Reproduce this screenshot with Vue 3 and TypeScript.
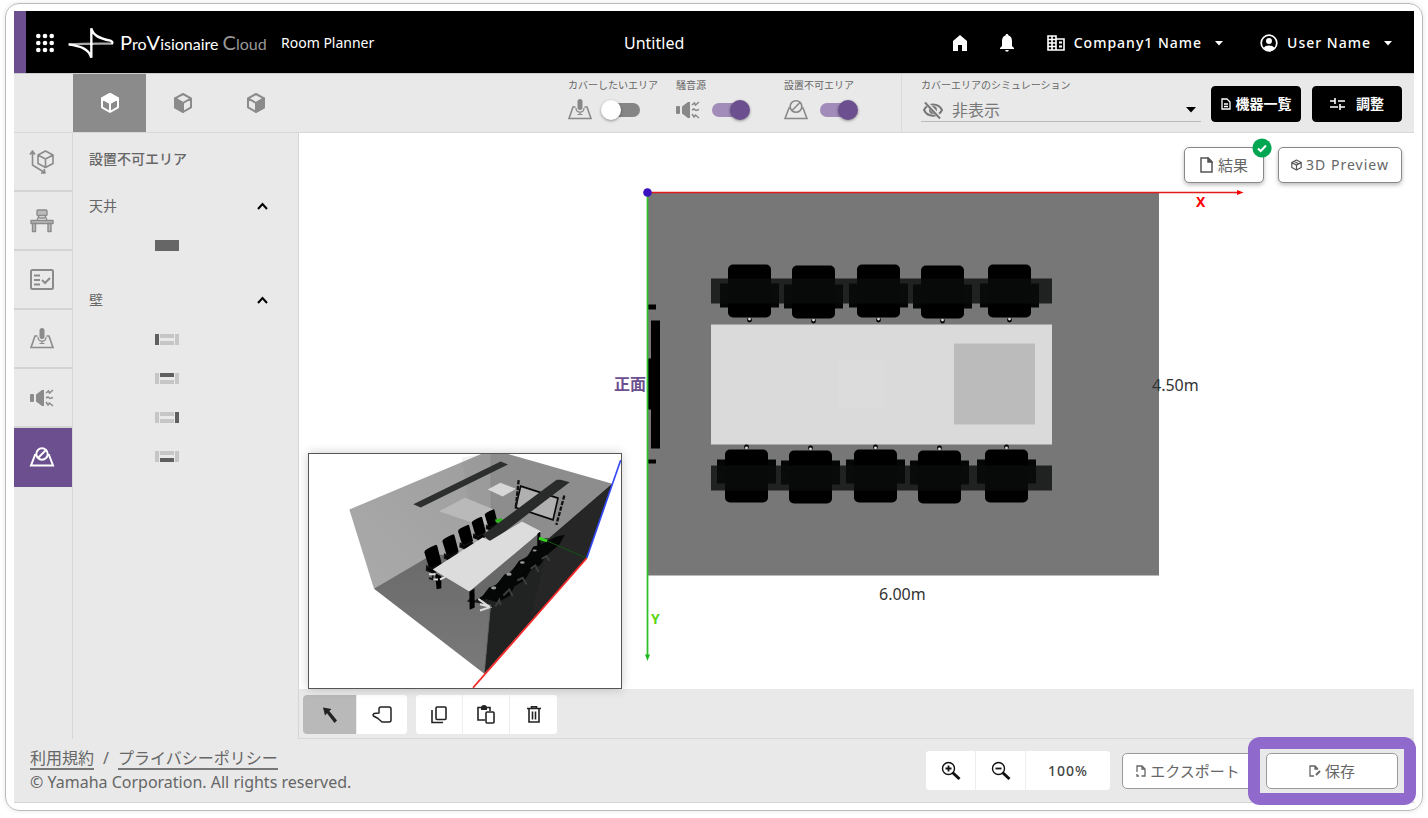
<script setup lang="ts">
import { ref } from 'vue'

interface Layer { key: string; label: string; on: boolean }

const layers = ref<Layer[]>([
  { key: 'cover', label: 'カバーしたいエリア', on: false },
  { key: 'noise', label: '騒音源', on: true },
  { key: 'blocked', label: '設置不可エリア', on: true },
])
const views = [
  { key: 'top', label: '上面' },
  { key: 'front', label: '正面図' },
  { key: 'side', label: '側面' },
]
const view = ref('top')
const steps = [
  { key: 'room', label: '部屋' },
  { key: 'furniture', label: '家具' },
  { key: 'check', label: '条件' },
  { key: 'cover', label: 'カバーエリア' },
  { key: 'noise', label: '騒音' },
  { key: 'blocked', label: '設置不可' },
]
const step = ref('blocked')
const walls = ['left', 'top', 'right', 'bottom']
const simulation = ref('off')
const tool = ref('select')

const upperChairs = [[749, 264], [813, 265], [878, 264], [942, 265], [1009, 264]]
const lowerChairs = [[746, 449], [810, 450], [875, 449], [939, 450], [1006, 449]]
</script>

<template>
  <div class="page">
    <div class="frame">
      <div class="app">
        <header class="header">
          <div class="brand">
            <button class="plain" aria-label="アプリ一覧">
              <svg width="18" height="20" viewBox="0 0 18 20" fill="#fff">
                <template v-for="r in 3" :key="r">
                  <circle v-for="c in 3" :key="c" :cx="c * 6.7 - 4.4" :cy="r * 7 - 4" r="2.3" />
                </template>
              </svg>
            </button>
            <svg class="mark" width="46" height="32" viewBox="205 83 138 94" fill="none">
              <path d="M207 134 Q262 131 338 132" stroke="#aaa" stroke-width="7" />
              <path d="M275 136 V86 C280 108 300 116 332 123 Q342 127 336 133" stroke="#fff" stroke-width="7" stroke-linejoin="bevel" />
              <path d="M207 134 C240 139 267 146 275 174 V132" stroke="#fff" stroke-width="7" stroke-linejoin="bevel" />
            </svg>
            <span class="logo"><b>P</b>ro<b>V</b>isionaire <span class="cloud"><b>C</b>loud</span></span>
            <span class="product">Room Planner</span>
          </div>
          <div class="title">Untitled</div>
          <nav class="account">
            <button class="plain" aria-label="ホーム">
              <svg width="16" height="16" viewBox="0 0 16 16" fill="#fff"><path d="M8 0 1 6v10h5v-6h4v6h5V6z" /></svg>
            </button>
            <button class="plain bell" aria-label="通知">
              <svg width="16" height="18" viewBox="0 0 16 18" fill="#fff"><path d="M8 0c-1 0-1.500.6-1.500 1.500C4 2.200 3 4.400 3 7v5l-2 2v1h14v-1l-2-2V7c0-2.600-1-4.800-3.500-5.500C9.500.6 9 0 8 0zM6.200 16h3.600a1.800 1.800 0 0 1-3.600 0z" /></svg>
            </button>
            <button class="plain menu">
              <svg width="18" height="16" viewBox="0 0 18 16" fill="none" stroke="#fff" stroke-width="1.600">
                <path d="M9 15H1V1h8v14M9 4h8v11H8M1 4.500h8M1 8h8M1 11.500h8M5 1v14" /><path d="M12 7.500h3M12 11.500h3" stroke-width="2" />
              </svg>
              <span>Company1 Name</span>
              <svg class="caret" width="8" height="5" viewBox="0 0 8 5" fill="#fff"><path d="M0 0h8L4 4.500z" /></svg>
            </button>
            <button class="plain menu user">
              <svg width="18" height="18" viewBox="0 0 18 18" fill="none" stroke="#fff">
                <circle cx="9" cy="9" r="7.800" stroke-width="1.700" /><circle cx="9" cy="7" r="3" fill="#fff" stroke="none" /><path d="M3.500 14c2-3.300 9-3.300 11 0-3 3.300-8 3.300-11 0z" fill="#fff" stroke="none" />
              </svg>
              <span>User Name</span>
              <svg class="caret" width="8" height="5" viewBox="0 0 8 5" fill="#fff"><path d="M0 0h8L4 4.500z" /></svg>
            </button>
          </nav>
        </header>

        <div class="toolbar">
          <div class="views">
            <button v-for="v in views" :key="v.key" :aria-label="v.label" :class="['view', { active: view === v.key }]" @click="view = v.key">
              <svg width="20" height="22" viewBox="0 0 20 22" fill="none" stroke="currentColor" stroke-width="2" stroke-linejoin="round">
                <path d="M10 2 18 6.300v9L10 20 2 15.300v-9zM2 6.300 10 11l8-4.700M10 11v9" />
                <path v-if="v.key === 'top'" d="M10 2 18 6.300 10 11 2 6.300z" fill="currentColor" />
                <path v-else-if="v.key === 'front'" d="M2 6.300 10 11v9l-8-4.700z" fill="currentColor" />
                <path v-else d="M18 6.300 10 11v9l8-4.700z" fill="currentColor" />
              </svg>
            </button>
          </div>
          <div class="layers">
            <label v-for="l in layers" :key="l.key" class="layer">
              <span class="caption">{{ l.label }}</span>
              <span class="layer-row">
                <svg v-if="l.key === 'cover'" width="24" height="22" viewBox="0 0 24 22" fill="none" stroke="#888" stroke-width="1.500">
                  <path d="M7.500 8H5L1 19.500h22L19 8h-2.500" /><rect x="9.500" y="0" width="5" height="11" rx="2.500" fill="#888" stroke="none" /><path d="M8 9c0 5.500 8 5.500 8 0M12 13v2.500M9.500 15.500h5" stroke-width="1.200" />
                </svg>
                <svg v-else-if="l.key === 'noise'" width="24" height="22" viewBox="0 0 24 22" fill="#888">
                  <rect x="0" y="7" width="4" height="8" rx="1" /><path d="M6 7.500 12 3h2v16h-2L6 14.500z" /><path d="m16 6 2.500-2 1 2L23 3M16 11l2-1 2 1.500 3-1M16 15l2 3 1.500-2 3.500 3" fill="none" stroke="#888" stroke-width="1.500" />
                </svg>
                <svg v-else width="24" height="22" viewBox="0 0 24 22" fill="none" stroke="#888" stroke-width="1.600">
                  <path d="M6.500 9H5L1 19.500h22L19 9h-1.500" /><circle cx="12" cy="7.500" r="5.800" /><path d="m8 11.500 8-8" />
                </svg>
                <input v-model="l.on" type="checkbox" role="switch" class="switch">
              </span>
            </label>
          </div>
          <div class="simulation">
            <label class="caption" for="simulation">カバーエリアのシミュレーション</label>
            <div class="select-box">
              <svg width="20" height="18" viewBox="0 0 20 18" fill="none" stroke="#777" stroke-width="2">
                <path d="M1 9c3.500-7.500 14.500-7.500 18 0-3.500 7.500-14.500 7.500-18 0z" /><circle cx="10" cy="9" r="3" fill="#777" /><path d="m2.500 1 15 16" stroke="#e9e9e9" stroke-width="4" /><path d="m2 1.500 15 16" />
              </svg>
              <select id="simulation" v-model="simulation">
                <option value="off">非表示</option>
                <option value="on">表示</option>
              </select>
              <svg class="select-caret" width="10" height="6" viewBox="0 0 10 6"><path d="M0 0h10L5 5.500z" /></svg>
            </div>
          </div>
          <div class="actions">
            <button class="dark">
              <svg width="10" height="12" viewBox="0 0 10 12" fill="none" stroke="#fff" stroke-width="1.300"><path d="M1 1h5l3 3v7H1zM3 6h4M3 8.500h4" /></svg>
              <span>機器一覧</span>
            </button>
            <button class="dark wide">
              <svg width="15" height="14" viewBox="0 0 15 14" fill="none" stroke="#fff" stroke-width="1.600"><path d="M0 4h5M5 1v6M8 4h7M0 10h8M10 7v6M10 10h5" /></svg>
              <span>調整</span>
            </button>
          </div>
        </div>

        <div class="body">
          <nav class="rail">
            <button v-for="s in steps" :key="s.key" :aria-label="s.label" :class="['step', { active: step === s.key }]" @click="step = s.key">
              <svg v-if="s.key === 'room'" width="26" height="26" viewBox="0 0 26 26" fill="none" stroke="currentColor" stroke-width="1.600" stroke-linejoin="round">
                <path d="m16.500 2 7.500 4v8.500l-7.500 4-7.500-4V6zM9 6l7.500 4L24 6M16.500 10v8.500M3.500 3v13l12 7.500M1 5.500 3.500 2 6 5.500M12 24h4l-1-4" />
              </svg>
              <svg v-else-if="s.key === 'furniture'" width="26" height="26" viewBox="0 0 26 26" fill="#bbb" stroke="currentColor" stroke-width="1.400" stroke-linejoin="round">
                <rect x="8" y="2" width="10" height="5.500" rx="1" /><path d="m10 7.500-2 5M16 7.500l2 5M10 10h6" /><path d="M2 12.500h22v3H2z" /><path d="M3.500 15.500h3v8h-3zM19 15.500h3v8h-3z" />
              </svg>
              <svg v-else-if="s.key === 'check'" width="26" height="26" viewBox="0 0 26 26" fill="none" stroke="currentColor" stroke-width="2">
                <rect x="2" y="3" width="22" height="19" rx="1.500" /><path d="M5 8.500h6M5 13h6M5 17.500h6M13 13l3 3 5-5" />
              </svg>
              <svg v-else-if="s.key === 'cover'" width="26" height="24" viewBox="-1 -1 26 24" fill="none" stroke="currentColor" stroke-width="1.600">
                <path d="M7.500 8H5L1 19.500h22L19 8h-2.500" /><rect x="9.500" y="0" width="5" height="11" rx="2.500" fill="currentColor" stroke="none" /><path d="M8 9c0 5.500 8 5.500 8 0M12 13v2.500M9.500 15.500h5" stroke-width="1.200" />
              </svg>
              <svg v-else-if="s.key === 'noise'" width="26" height="24" viewBox="-1 -1 26 24" fill="currentColor">
                <rect x="0" y="7" width="4" height="8" rx="1" /><path d="M6 7.500 12 3h2v16h-2L6 14.500z" /><path d="m16 6 2.500-2 1 2L23 3M16 11l2-1 2 1.500 3-1M16 15l2 3 1.500-2 3.500 3" fill="none" stroke="currentColor" stroke-width="1.500" />
              </svg>
              <svg v-else width="26" height="24" viewBox="-1 -1 26 24" fill="none" stroke="currentColor" stroke-width="2">
                <path d="M6.500 9H5L1 19.500h22L19 9h-1.500" /><circle cx="12" cy="8" r="5.700" /><path d="m8 12 8-8" />
              </svg>
            </button>
          </nav>

          <aside class="panel">
            <h2>設置不可エリア</h2>
            <section>
              <button class="plain section-head">
                <span>天井</span>
                <svg width="11" height="8" viewBox="0 0 11 8" fill="none" stroke="#000" stroke-width="2"><path d="M1 7 5.500 2 10 7" /></svg>
              </button>
              <button class="plain item" aria-label="天井エリア"><svg width="24" height="12"><rect width="24" height="11" fill="#666" /></svg></button>
            </section>
            <section>
              <button class="plain section-head">
                <span>壁</span>
                <svg width="11" height="8" viewBox="0 0 11 8" fill="none" stroke="#000" stroke-width="2"><path d="M1 7 5.500 2 10 7" /></svg>
              </button>
              <button v-for="w in walls" :key="w" class="plain item" :aria-label="w">
                <svg width="24" height="12" viewBox="0 0 24 12" fill="#c6c6c6">
                  <rect :class="{ on: w === 'left' }" width="4" height="11" />
                  <rect :class="{ on: w === 'top' }" x="5" width="14" height="4" />
                  <rect :class="{ on: w === 'right' }" x="20" width="4" height="11" />
                  <rect :class="{ on: w === 'bottom' }" x="5" y="7" width="14" height="4" />
                </svg>
              </button>
            </section>
          </aside>

          <main class="work">
            <div class="canvas">
              <svg class="plan" viewBox="299 133 1115 555">
                <rect x="648" y="192" width="511" height="383" fill="#777" />
                <path d="M648 304h8v5h-8zM648 459h8v4h-8zM651 320h9v128h-9zM648 358h4v51h-4z" />
                <rect x="711" y="324" width="341" height="120" fill="#dadada" />
                <rect x="838" y="360" width="46" height="47" fill="#dcdcdc" />
                <rect x="954" y="343" width="81" height="81" fill="#bbb" />
                <g v-for="c in upperChairs" :key="c[0]">
                  <circle :cx="c[0] + 0.5" :cy="c[1] + 55.5" r="2.400" />
                  <circle :cx="c[0] + 0.5" :cy="c[1] + 54.5" r="1.400" fill="#ddd" />
                  <rect :x="c[0] - 29" :y="c[1] + 19" width="59" height="24" fill="#050606" />
                  <rect :x="c[0] - 21" :y="c[1]" width="43" height="53" rx="5" />
                </g>
                <g v-for="c in lowerChairs" :key="c[0]">
                  <circle :cx="c[0] + 0.5" :cy="c[1] - 2.500" r="2.400" />
                  <circle :cx="c[0] + 0.5" :cy="c[1] - 1.500" r="1.400" fill="#ddd" />
                  <rect :x="c[0] - 29" :y="c[1] + 10" width="59" height="24" fill="#050606" />
                  <rect :x="c[0] - 21" :y="c[1]" width="43" height="53" rx="5" />
                </g>
                <path d="M711 278h341v25H711zM711 465h341v25H711z" fill="#0a0d0c" opacity=".8" />
                <path d="M648 192h590" stroke="#e31b1b" stroke-width="1.600" /><path d="m1237 189.500 6.500 2.500-6.500 2.500z" fill="#f00" />
                <path d="M647.500 192v464" stroke="#32c02b" stroke-width="1.800" /><path d="m645 654 2.500 6.500 2.500-6.500z" fill="#1fb81f" />
                <circle cx="647.500" cy="192" r="4.300" fill="#3b10c0" />
                <text x="1196" y="206" class="axis" fill="#f00">X</text>
                <text x="651" y="623" class="axis" fill="#5bd60f">Y</text>
                <text x="614" y="389" class="front">正面</text>
                <text x="1152" y="390" class="size">4.50m</text>
                <text x="879" y="599" class="size">6.00m</text>
              </svg>

              <div class="floating">
                <button class="light result">
                  <svg width="13" height="16" viewBox="0 0 13 16" fill="none" stroke="#555" stroke-width="1.500"><path d="M1 1h7l4 4v10H1z" /><path d="M8 1v4h4z" fill="#555" /></svg>
                  <span>結果</span>
                  <svg class="badge" width="20" height="20" viewBox="0 0 20 20"><circle cx="10" cy="10" r="9.600" fill="#00a651" /><path d="m6 10.500 2.700 2.500L14 7.500" fill="none" stroke="#fff" stroke-width="2" /></svg>
                </button>
                <button class="light preview-button">
                  <svg width="11" height="12" viewBox="0 0 11 12" fill="none" stroke="#555" stroke-width="1.200" stroke-linejoin="round"><path d="m5.500 1 4.700 2.500v5L5.500 11 .8 8.500v-5zM.8 3.500l4.700 2.600 4.700-2.600M5.500 6v5M3 2.300l5 2.800" /></svg>
                  <span>3D Preview</span>
                </button>
              </div>

              <svg class="preview" viewBox="27 27 936 699" aria-label="3D">
                <defs>
                  <linearGradient id="wall" x1="0" y1="1" x2="1" y2="0"><stop offset="0" stop-color="#aaa" /><stop offset="1" stop-color="#9e9e9e" /></linearGradient>
                  <linearGradient id="floor" x1="0" y1="0" x2="0" y2="1"><stop offset="0" stop-color="#686868" /><stop offset="1" stop-color="#7a7a7a" /></linearGradient>
                </defs>
                <path d="M148 192 545 25h35v310L222 430z" fill="url(#wall)" />
                <path d="M572 25h50l315 90-180 165-185 60z" fill="#8d8d8d" />
                <path d="M540 27h35v170l-60 30-30-190z" fill="#777" opacity=".1" />
                <path d="m222 430 165-97 380-50-195 197-19 205z" fill="url(#floor)" />
                <path d="M937 115 860 338 553 685l19-207-72-10 110-110 110-80h30z" fill="#212322" />
                <path d="M937 115 860 338 690 520 750 275z" fill="#252625" />
                <path d="m340 176 22 10 262-129-22-9z" fill="#2d2f2e" />
                <path d="m417 197 78-40 85 34-3 48-61-8z" fill="#b9b9b9" />
                <path d="m563 132 38-20 47 18-40 23z" fill="#d7d7d7" />
                <path d="m662 122 112 36-15 65-112-37z" fill="#b0b0b0" stroke="#080808" stroke-width="5" />
                <path d="M656 104 647 190M793 150l-24 88" stroke="#111" stroke-width="7" stroke-dasharray="13 4" />
                <g v-for="c in [[373, 320, 1], [427, 287, .94], [474, 257, .87], [515, 232, .82], [554, 208, .76]]" :key="c[0]" :transform="`translate(${c[0]} ${c[1]}) scale(${c[2]})`">
                  <path d="M0 0q0-8 35-22 4 0 5 8l12 48-24 18-14-6z" /><path d="m8 42 15 8 23-12 10 8-29 16-20-8zM25 60v24M14 78l28 8" stroke="#111" stroke-width="5" />
                </g>
                <path d="m585 222 20-4 8 10-25 4z" fill="#2eb81e" />
                <path d="m548 268 222-165h12l27 7-236 180z" fill="#292b2a" />
                <path d="m398 372 150-96 22 10 96-58 58 30-216 180z" fill="#dcdcdc" />
                <path d="m405 383 19 9v36l-14 3zM508 438l16-10v58l-15 7zM712 265l9-7v48l-12 5z" />
                <path d="m524 430 188-163v37L546 455l-22 10z" fill="#686868" />
                <path d="m526 465 22-14 19-25 23-9 23-30 20-7 24-34 25-12 18-31 18-4 50-25 26-6-16 30-38 31-19 29-30 18-17 28-30 18-14 28-36 21-32-10z" fill="#050606" />
                <path d="m586 483 12-20 4 16M610 450l18-18 10 20M652 405l16-8 12 20M692 370l14-10 10 20M725 340l14-8 10 14" fill="none" stroke="#3c3e3d" stroke-width="6" />
                <g fill="#999"><ellipse cx="581" cy="427" rx="8" ry="5" /><ellipse cx="627" cy="386" rx="8" ry="5" /><ellipse cx="667" cy="351" rx="7" ry="4" /><ellipse cx="704" cy="315" rx="6" ry="3" /></g>
                <path d="m535 460 35 25-30 10M570 484l-30-8M387 386h20M400 402h14M420 402l16-8" fill="none" stroke="#ddd" stroke-width="6" />
                <path d="m718 274 25 8-3 8-24-7z" fill="#35d51e" />
                <path d="m743 287 117 51" stroke="#125414" stroke-width="3" />
                <path d="M553 685 572 478" stroke="#555" stroke-width="2" />
                <path d="M962 44 860 338" stroke="#3348f5" stroke-width="5" /><path d="M860 338 519 727" stroke="#f42828" stroke-width="5" />
              </svg>
            </div>

            <div class="tools">
              <div class="group">
                <button :class="['tool', 'first', { active: tool === 'select' }]" aria-label="選択" @click="tool = 'select'">
                  <svg width="16" height="18" viewBox="0 0 16 18"><path d="M1 1.500 9.500 3 7.300 5l7.700 9.500-2.500 2.500L5 7.300 3 9.500z" fill="#222" /></svg>
                </button>
                <button :class="['tool', 'pan', { active: tool === 'pan' }]" aria-label="移動" @click="tool = 'pan'">
                  <svg width="20" height="18" viewBox="0 0 20 18" fill="none" stroke="#222" stroke-width="1.500" stroke-linejoin="round"><path d="M7 7V3q0-2 2-2h8q2 0 2 2v11q0 2-2 2h-7L6 12.500 1.500 10q-1-1 .5-2.500z" /></svg>
                </button>
              </div>
              <div class="group">
                <button class="tool" aria-label="コピー">
                  <svg width="16" height="18" viewBox="0 0 16 18" fill="none" stroke="#222" stroke-width="1.600"><rect x="5" y="1" width="10" height="12.500" rx="1" /><path d="M1 4v12.500h11" /></svg>
                </button>
                <button class="tool" aria-label="貼り付け">
                  <svg width="18" height="19" viewBox="0 0 18 19" fill="none" stroke="#222" stroke-width="1.600"><path d="M8 15H1V2.500h12V6" /><path d="M4 3q0-3 3-3t3 3v2H4z" fill="#222" stroke="none" /><rect x="9" y="7" width="8" height="11" rx="1" /></svg>
                </button>
                <button class="tool" aria-label="削除">
                  <svg width="14" height="17" viewBox="0 0 14 17" fill="none" stroke="#222" stroke-width="1.600"><path d="M0 2.500h14M4.500 2V.8h5V2M2 3v13h10V3M5.500 5.500v8M8.500 5.500v8" /></svg>
                </button>
              </div>
            </div>
          </main>
        </div>

        <footer class="footer">
          <div class="legal">
            <div class="links"><a href="#terms">利用規約</a><span>/</span><a href="#privacy">プライバシーポリシー</a></div>
            <div>© Yamaha Corporation. All rights reserved.</div>
          </div>
          <div class="footer-actions">
            <div class="group zoom">
              <button class="tool" aria-label="拡大">
                <svg width="20" height="20" viewBox="0 0 20 20" fill="none" stroke="#111"><circle cx="7.500" cy="7.500" r="6" stroke-width="1.400" /><path d="M7.500 4.500v6M4.500 7.500h6" stroke-width="1.800" /><path d="m11.500 11.500 7 6.500" stroke-width="3" /></svg>
              </button>
              <button class="tool" aria-label="縮小">
                <svg width="20" height="20" viewBox="0 0 20 20" fill="none" stroke="#111"><circle cx="7.500" cy="7.500" r="6" stroke-width="1.400" /><path d="M4.500 7.500h6" stroke-width="1.800" /><path d="m11.500 11.500 7 6.500" stroke-width="3" /></svg>
              </button>
              <button class="tool percent">100%</button>
            </div>
            <button class="light flat">
              <svg width="10" height="12" viewBox="0 0 10 12" fill="none" stroke="#666" stroke-width="1.300"><path d="M1 7V1h5l3 3v7H5.500M6 1v3h3M1 9v2h2" /></svg>
              <span>エクスポート</span>
            </button>
            <div class="save-wrap">
              <button class="light flat save">
                <svg width="12" height="12" viewBox="0 0 12 12" fill="none" stroke="#666" stroke-width="1.300"><path d="M5 11H1V1h5l3 3M6 1v3h3" /><path d="m7 10 4-4" stroke-width="2" /></svg>
                <span>保存</span>
              </button>
              <div class="highlight"></div>
            </div>
          </div>
        </footer>
      </div>
    </div>
  </div>
</template>

<style>
body { margin: 0; background: #fff; }
</style>

<style scoped>
* { box-sizing: border-box; }
.page {
  display: flex;
  min-height: 100vh;
  padding: 3px 5px 7px;
  font-family: "Noto Sans", "Noto Sans CJK JP", sans-serif;
  font-size: 15px;
  line-height: 20px;
  color: #666;
}
.frame {
  flex: 1;
  display: flex;
  padding: 7px 8px;
  border: 1px solid #bbb;
  border-radius: 14px;
  box-shadow: 0 0 5px #e4e4e4;
}
.app { flex: 1; display: flex; flex-direction: column; min-width: 0; background: #e9e9e9; }
button, select { font: inherit; color: inherit; cursor: pointer; }
svg { display: block; flex: none; }
.plain { padding: 0; border: 0; background: none; }

.header {
  display: flex;
  align-items: center;
  height: 62px;
  padding: 2px 22px 0 10px;
  border-left: 12px solid #6c4f8e;
  background: #000;
  color: #fff;
}
.brand { display: flex; align-items: center; width: 588px; }
.mark { margin-left: 14px; }
.logo { margin-left: 6px; width: 146px; font-family: Lato, sans-serif; font-size: 16px; white-space: nowrap; }
.logo b { font-weight: 400; font-size: 20px; }
.cloud { color: #999; }
.product { margin-left: 15px; font-size: 14px; white-space: nowrap; }
.title { font-size: 16px; }
.account { display: flex; align-items: center; margin-left: auto; }
.bell { margin-left: 31px; }
.menu { display: flex; align-items: center; gap: 9px; margin-left: 32px; font-size: 14px; font-weight: 500; white-space: nowrap; letter-spacing: 1px; }
.menu.user { margin-left: 37px; }
.caret { margin-left: 4px; }

.toolbar { display: flex; height: 60px; border-bottom: 1px solid #d8d8d8; border-top: 1px solid #ccc; }
.views { display: flex; padding-left: 59px; }
.view { display: flex; align-items: center; justify-content: center; width: 73px; border: 0; padding: 0; background: none; color: #8b8b8b; }
.view.active { background: #8b8b8b; color: #fff; }
.layers { display: flex; margin-left: auto; padding-right: 9px; }
.layer { width: 108px; padding-top: 4px; cursor: pointer; }
.caption { display: block; font-size: 10px; line-height: 14px; white-space: nowrap; color: #666; }
.layer-row { display: flex; align-items: center; gap: 12px; height: 36px; }
.switch {
  position: relative;
  appearance: none;
  width: 36px;
  height: 14px;
  margin: 0;
  border-radius: 7px;
  background: #858585;
  cursor: pointer;
}
.switch::before {
  content: "";
  position: absolute;
  left: -3px;
  top: -3px;
  width: 20px;
  height: 20px;
  border-radius: 50%;
  background: #fff;
  box-shadow: 0 1px 3px #0006;
}
.switch:checked { background: #a18cba; }
.switch:checked::before { left: 18px; background: #6c4f8e; }
.simulation { flex: 0 0 310px; padding: 4px 10px 0 19px; border-left: 1px solid #dcdcdc; }
.select-box { display: flex; align-items: center; gap: 9px; height: 30px; margin-top: 0; padding: 6px 5px 0 2px; border-bottom: 1px solid #bbb; }
.select-box select { flex: 1; appearance: none; border: 0; padding: 0; background: none; font-size: 16px; line-height: 24px; color: #777; }
.actions { display: flex; gap: 11px; padding: 12px 12px 0 0; }
.dark {
  display: flex;
  align-items: center;
  justify-content: center;
  gap: 5px;
  width: 90px;
  height: 36px;
  padding: 0;
  border: 1px solid #000;
  border-radius: 4px;
  background: #000;
  color: #fff;
  font-weight: 700;
  font-size: 14px;
  white-space: nowrap;
}
.dark.wide { gap: 11px; }

.body { flex: 1; display: flex; min-height: 0; }
.rail { width: 59px; border-right: 1px solid #d6d6d6; }
.step {
  display: flex;
  align-items: center;
  justify-content: center;
  width: 58px;
  height: 59px;
  padding: 0 3px 0 0;
  border: 0;
  border-bottom: 2px solid #d4d4d4;
  background: none;
  color: #8b8b8b;
}
.step.active { background: #6c4f8e; border-color: #6c4f8e; color: #fff; }
.panel { width: 226px; padding: 16px 30px 0 16px; border-right: 1px solid #d6d6d6; font-size: 14px; }
.panel h2 { margin: 0 0 27px; font-size: 14px; line-height: 20px; font-weight: 500; }
.section-head { display: flex; justify-content: space-between; align-items: center; width: 100%; height: 20px; margin-bottom: 10px; }
.panel section { margin-bottom: 25px; }
.item { display: flex; align-items: center; width: 100%; height: 39px; padding-left: 66px; }
.item .on { fill: #5f5f5f; }

.work { flex: 1; display: flex; flex-direction: column; min-width: 0; }
.canvas { position: relative; flex: 1; background: #fff; }
.plan { position: absolute; inset: 0; width: 100%; height: 100%; }
.axis { font-size: 14px; font-weight: 700; }
.front { font-size: 16px; font-weight: 700; fill: #6c4f8e; }
.size { font-size: 16px; fill: #333; }
.floating { position: absolute; top: 14px; right: 12px; display: flex; gap: 14px; }
.light {
  position: relative;
  display: flex;
  align-items: center;
  justify-content: center;
  gap: 4px;
  height: 36px;
  padding: 0;
  border: 1px solid #888;
  border-radius: 5px;
  background: #fff;
  box-shadow: 0 2px 4px #0004;
  white-space: nowrap;
}
.result { width: 80px; gap: 5px; }
.preview-button { width: 124px; font-size: 14px; letter-spacing: 1px; }
.badge { position: absolute; top: -10px; right: -9px; }
.preview { position: absolute; left: 9px; bottom: 0; width: 314px; height: 236px; border: 1px solid #555; background: #fff; box-shadow: 0 0 10px #0003; }

.tools { display: flex; gap: 9px; height: 50px; padding: 6px 4px 4px; border-bottom: 1px solid #d8d8d8; }
.group { display: flex; height: 39px; border-radius: 4px; overflow: hidden; background: #fff; }
.tool { display: flex; align-items: center; justify-content: center; width: 47px; padding: 0; border: 0; border-right: 1px solid #eee; background: #fff; }
.tool:last-child { border-right: 0; }
.tool.first { width: 54px; }
.tool.pan { width: 50px; }
.tool.active { background: #b9b9b9; }
.footer { display: flex; justify-content: space-between; align-items: center; height: 64px; padding: 0 16px; border-bottom: 1px solid #d4d4d4; }
.legal { font-size: 16px; line-height: 24px; white-space: nowrap; }
.links { display: flex; gap: 9px; line-height: 20px; }
.links a { color: inherit; text-decoration: none; border-bottom: 2px solid #777; }
.footer-actions { display: flex; align-items: center; gap: 12px; }
.zoom .tool { width: 50px; }
.zoom .percent { width: 84px; font-size: 14px; font-weight: 500; color: #444; letter-spacing: 1px; }
.flat { width: 132px; box-shadow: none; border-color: #999; font-size: 15px; }
.save-wrap { position: relative; }
.highlight { position: absolute; inset: -16px -18px; border: 12px solid #9069cd; border-radius: 12px; pointer-events: none; }
</style>
